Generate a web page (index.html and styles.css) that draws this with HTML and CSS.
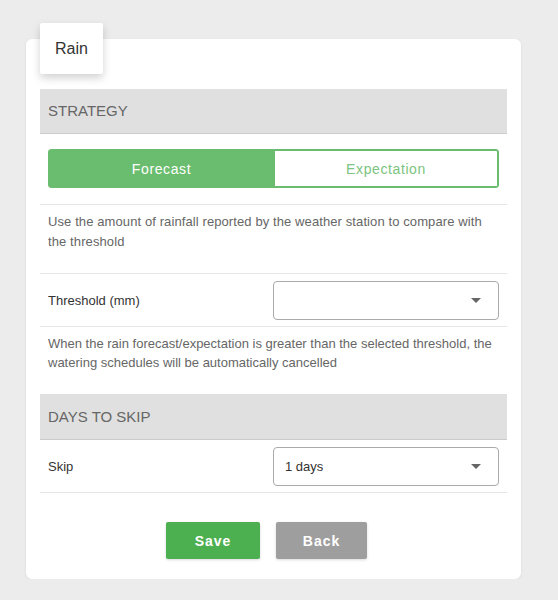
FILE: index.html
```html
<!DOCTYPE html>
<html lang="en">

<head>
  <meta charset="UTF-8">
  <meta name="viewport" content="width=device-width, initial-scale=1.0">
  <title>Rain</title>
  <link rel="stylesheet" href="styles.css">
</head>

<body>
  <div class="card">
    <div class="tab">Rain</div>

    <div class="section-header">STRATEGY</div>

    <div class="toggle-row">
      <div class="toggle">
        <button class="toggle-btn active">Forecast</button>
        <button class="toggle-btn">Expectation</button>
      </div>
    </div>

    <p class="hint first">Use the amount of rainfall reported by the weather station to compare with the threshold</p>

    <div class="field-row">
      <span class="label">Threshold (mm)</span>
      <div class="select">
        <span class="select-value"></span>
        <span class="caret"></span>
      </div>
    </div>

    <p class="hint last">When the rain forecast/expectation is greater than the selected threshold, the watering schedules will be automatically cancelled</p>

    <div class="section-header tall">DAYS TO SKIP</div>

    <div class="field-row">
      <span class="label">Skip</span>
      <div class="select">
        <span class="select-value">1 days</span>
        <span class="caret"></span>
      </div>
    </div>

    <div class="actions">
      <button class="btn save">Save</button>
      <button class="btn back">Back</button>
    </div>
  </div>
</body>

</html>
```

FILE: styles.css
```css
body {
  margin: 0;
  font-family: 'Liberation Sans', Arial, sans-serif;
  background-color: #ececec;
  color: #333;
}

.card {
  position: relative;
  box-sizing: border-box;
  width: 495px;
  height: 540px;
  margin: 39px 0 0 26px;
  padding: 50px 14px 20px;
  background: #fff;
  border-radius: 6px;
  box-shadow: 0 1px 3px rgba(0, 0, 0, 0.08);
}

.tab {
  position: absolute;
  left: 14px;
  top: -16px;
  width: 63px;
  height: 51px;
  display: flex;
  align-items: center;
  justify-content: center;
  background: #fff;
  font-size: 16px;
  color: #333;
  border-radius: 2px;
  box-shadow: 0 4px 9px rgba(0, 0, 0, 0.18);
}

.section-header {
  height: 44px;
  line-height: 44px;
  padding-left: 8px;
  background: #e0e0e0;
  border-bottom: 1px solid #cbcbcb;
  font-size: 15px;
  color: #666;
}

.section-header.tall {
  height: 45px;
  line-height: 45px;
}

.toggle-row {
  padding: 15px 8px 16px;
  border-bottom: 1px solid #e6e6e6;
}

.toggle {
  display: flex;
  height: 39px;
  border-radius: 3px;
  overflow: hidden;
}

.toggle-btn {
  flex: 1;
  margin: 0;
  font-family: inherit;
  font-size: 14px;
  letter-spacing: 0.6px;
  background: #fff;
  color: #7cc47f;
  border: 2px solid #6abd6e;
  border-left: none;
  border-radius: 0 3px 3px 0;
}

.toggle-btn.active {
  flex: 0 0 227px;
  background: #6abd6e;
  color: #fff;
  border: none;
  border-radius: 3px 0 0 3px;
}

.hint {
  margin: 0;
  padding: 7px 8px 21px;
  font-size: 13px;
  line-height: 20px;
  letter-spacing: 0.1px;
  color: #666;
  border-bottom: 1px solid #e6e6e6;
}

.hint.last {
  padding: 7px 8px 22px;
  line-height: 19px;
  letter-spacing: 0;
  border-bottom: none;
}

.field-row {
  display: flex;
  align-items: center;
  justify-content: space-between;
  padding: 7px 8px 6px;
  border-bottom: 1px solid #e6e6e6;
}

.label {
  font-size: 13px;
  color: #333;
}

.select {
  box-sizing: border-box;
  display: flex;
  align-items: center;
  justify-content: space-between;
  width: 226px;
  height: 39px;
  padding: 0 17px 0 11px;
  border: 1px solid #aaa;
  border-radius: 4px;
  font-size: 13px;
  color: #333;
}

.caret {
  width: 0;
  height: 0;
  border-left: 5px solid transparent;
  border-right: 5px solid transparent;
  border-top: 5px solid #666;
}

.actions {
  display: flex;
  justify-content: center;
  gap: 16px;
  padding: 29px 14px 0 0;
}

.btn {
  height: 37px;
  border: none;
  border-radius: 2px;
  font-family: inherit;
  font-size: 14px;
  font-weight: bold;
  letter-spacing: 1px;
  color: #fff;
  box-shadow: 0 1px 3px rgba(0, 0, 0, 0.15);
  cursor: pointer;
}

.save {
  width: 94px;
  background-color: #4caf50;
}

.back {
  width: 91px;
  background-color: #9e9e9e;
}
```
